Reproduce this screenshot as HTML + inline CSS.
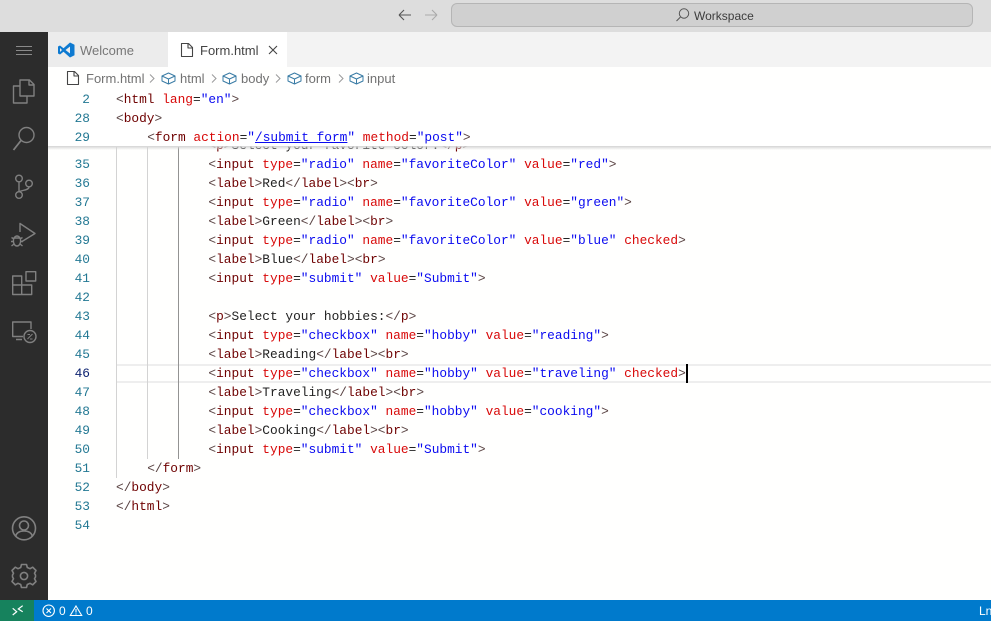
<!DOCTYPE html>
<html><head><meta charset="utf-8"><style>
html,body{margin:0;padding:0;background:#fff}
#r{position:relative;width:991px;height:621px;overflow:hidden;background:#fffffe;font-family:"Liberation Sans",sans-serif}
.b{position:absolute}
svg{position:absolute;left:0;top:0;overflow:visible}
.l,.n{position:absolute;font-family:"Liberation Mono",monospace;font-size:12.83px;line-height:19px;height:19px;white-space:pre;color:#222}
.n{left:60px;width:30px;text-align:right;color:#237893}
.l{left:116px}
i{font-style:normal}
.t{color:#6e0000}.a{color:#d80808}.s{color:#0a0af0}.d{color:#5a4444}
.g{position:absolute;width:1px;background:#d3d3d3}
.c{position:absolute;font-size:13px;color:#727272;line-height:18px;white-space:pre}
</style></head><body><div id="r">
<div class="b" style="left:0;top:0;width:991px;height:32px;background:#ddd"></div>
<div class="b" style="left:451px;top:3px;width:520px;height:22px;background:#d0d0d0;border:1px solid #b5b5b5;border-radius:6px"></div>
<div class="c" style="left:694px;top:7px;font-size:12px;color:#3c3c3c">Workspace</div>
<div class="b" style="left:48px;top:32px;width:943px;height:35px;background:#f3f3f3"></div>
<div class="b" style="left:48px;top:32px;width:120px;height:35px;background:#ececec"></div>
<div class="b" style="left:168px;top:32px;width:119px;height:35px;background:#fff"></div>
<div class="c" style="left:80px;top:42px;color:#777">Welcome</div>
<div class="c" style="left:200px;top:42px;color:#444">Form.html</div>
<div class="c" style="left:86px;top:70px">Form.html</div>
<div class="c" style="left:180px;top:70px">html</div>
<div class="c" style="left:241px;top:70px">body</div>
<div class="c" style="left:305px;top:70px">form</div>
<div class="c" style="left:367px;top:70px">input</div>
<div class="b" style="left:0;top:32px;width:48px;height:568px;background:#2c2c2c"></div>
<div class="b" style="left:0;top:600px;width:991px;height:21px;background:#007acc"></div>
<div class="b" style="left:0;top:600px;width:34px;height:21px;background:#16825d"></div>
<div class="c" style="left:59px;top:602px;font-size:12px;color:#fff">0</div>
<div class="c" style="left:86px;top:602px;font-size:12px;color:#fff">0</div>
<div class="c" style="left:979px;top:602px;font-size:12px;color:#fff">Ln</div>

<div class="b" style="left:117px;top:364px;width:874px;height:15px;border-top:2px solid #eee;border-bottom:2px solid #eee"></div>
<div class="g" style="left:116px;top:147px;height:331px"></div>
<div class="g" style="left:147px;top:147px;height:312px"></div>
<div class="g" style="left:178px;top:147px;height:312px;background:#939393"></div>

<div class="l" style="left:208.4px;top:136px"><i class="d">&lt;</i><i class="t">p</i><i class="d">&gt;</i>Select your favorite color:<i class="d">&lt;/</i><i class="t">p</i><i class="d">&gt;</i></div>
<div class="n" style="top:155px">35</div><div class="l" style="left:208.4px;top:155px"><i class="d">&lt;</i><i class="t">input</i> <i class="a">type</i>=<i class="s">"radio"</i> <i class="a">name</i>=<i class="s">"favoriteColor"</i> <i class="a">value</i>=<i class="s">"red"</i><i class="d">&gt;</i></div>
<div class="n" style="top:174px">36</div><div class="l" style="left:208.4px;top:174px"><i class="d">&lt;</i><i class="t">label</i><i class="d">&gt;</i>Red<i class="d">&lt;/</i><i class="t">label</i><i class="d">&gt;&lt;</i><i class="t">br</i><i class="d">&gt;</i></div>
<div class="n" style="top:193px">37</div><div class="l" style="left:208.4px;top:193px"><i class="d">&lt;</i><i class="t">input</i> <i class="a">type</i>=<i class="s">"radio"</i> <i class="a">name</i>=<i class="s">"favoriteColor"</i> <i class="a">value</i>=<i class="s">"green"</i><i class="d">&gt;</i></div>
<div class="n" style="top:212px">38</div><div class="l" style="left:208.4px;top:212px"><i class="d">&lt;</i><i class="t">label</i><i class="d">&gt;</i>Green<i class="d">&lt;/</i><i class="t">label</i><i class="d">&gt;&lt;</i><i class="t">br</i><i class="d">&gt;</i></div>
<div class="n" style="top:231px">39</div><div class="l" style="left:208.4px;top:231px"><i class="d">&lt;</i><i class="t">input</i> <i class="a">type</i>=<i class="s">"radio"</i> <i class="a">name</i>=<i class="s">"favoriteColor"</i> <i class="a">value</i>=<i class="s">"blue"</i> <i class="a">checked</i><i class="d">&gt;</i></div>
<div class="n" style="top:250px">40</div><div class="l" style="left:208.4px;top:250px"><i class="d">&lt;</i><i class="t">label</i><i class="d">&gt;</i>Blue<i class="d">&lt;/</i><i class="t">label</i><i class="d">&gt;&lt;</i><i class="t">br</i><i class="d">&gt;</i></div>
<div class="n" style="top:269px">41</div><div class="l" style="left:208.4px;top:269px"><i class="d">&lt;</i><i class="t">input</i> <i class="a">type</i>=<i class="s">"submit"</i> <i class="a">value</i>=<i class="s">"Submit"</i><i class="d">&gt;</i></div>
<div class="n" style="top:288px">42</div>
<div class="n" style="top:307px">43</div><div class="l" style="left:208.4px;top:307px"><i class="d">&lt;</i><i class="t">p</i><i class="d">&gt;</i>Select your hobbies:<i class="d">&lt;/</i><i class="t">p</i><i class="d">&gt;</i></div>
<div class="n" style="top:326px">44</div><div class="l" style="left:208.4px;top:326px"><i class="d">&lt;</i><i class="t">input</i> <i class="a">type</i>=<i class="s">"checkbox"</i> <i class="a">name</i>=<i class="s">"hobby"</i> <i class="a">value</i>=<i class="s">"reading"</i><i class="d">&gt;</i></div>
<div class="n" style="top:345px">45</div><div class="l" style="left:208.4px;top:345px"><i class="d">&lt;</i><i class="t">label</i><i class="d">&gt;</i>Reading<i class="d">&lt;/</i><i class="t">label</i><i class="d">&gt;&lt;</i><i class="t">br</i><i class="d">&gt;</i></div>
<div class="n" style="top:364px;color:#0b216f">46</div><div class="l" style="left:208.4px;top:364px"><i class="d">&lt;</i><i class="t">input</i> <i class="a">type</i>=<i class="s">"checkbox"</i> <i class="a">name</i>=<i class="s">"hobby"</i> <i class="a">value</i>=<i class="s">"traveling"</i> <i class="a">checked</i><i class="d">&gt;</i></div>
<div class="n" style="top:383px">47</div><div class="l" style="left:208.4px;top:383px"><i class="d">&lt;</i><i class="t">label</i><i class="d">&gt;</i>Traveling<i class="d">&lt;/</i><i class="t">label</i><i class="d">&gt;&lt;</i><i class="t">br</i><i class="d">&gt;</i></div>
<div class="n" style="top:402px">48</div><div class="l" style="left:208.4px;top:402px"><i class="d">&lt;</i><i class="t">input</i> <i class="a">type</i>=<i class="s">"checkbox"</i> <i class="a">name</i>=<i class="s">"hobby"</i> <i class="a">value</i>=<i class="s">"cooking"</i><i class="d">&gt;</i></div>
<div class="n" style="top:421px">49</div><div class="l" style="left:208.4px;top:421px"><i class="d">&lt;</i><i class="t">label</i><i class="d">&gt;</i>Cooking<i class="d">&lt;/</i><i class="t">label</i><i class="d">&gt;&lt;</i><i class="t">br</i><i class="d">&gt;</i></div>
<div class="n" style="top:440px">50</div><div class="l" style="left:208.4px;top:440px"><i class="d">&lt;</i><i class="t">input</i> <i class="a">type</i>=<i class="s">"submit"</i> <i class="a">value</i>=<i class="s">"Submit"</i><i class="d">&gt;</i></div>
<div class="n" style="top:459px">51</div><div class="l" style="left:147.2px;top:459px"><i class="d">&lt;/</i><i class="t">form</i><i class="d">&gt;</i></div>
<div class="n" style="top:478px">52</div><div class="l" style="top:478px"><i class="d">&lt;/</i><i class="t">body</i><i class="d">&gt;</i></div>
<div class="n" style="top:497px">53</div><div class="l" style="top:497px"><i class="d">&lt;/</i><i class="t">html</i><i class="d">&gt;</i></div>
<div class="n" style="top:516px">54</div>
<div class="b" style="left:686px;top:364px;width:2px;height:19px;background:#000"></div>

<div class="b" style="left:48px;top:90px;width:943px;height:56px;background:#fff"></div>
<div class="b" style="left:48px;top:146px;width:943px;height:4px;background:linear-gradient(#d4d4d4,rgba(220,220,220,0))"></div>
<div class="n" style="top:90px">2</div><div class="l" style="top:90px"><i class="d">&lt;</i><i class="t">html</i> <i class="a">lang</i>=<i class="s">"en"</i><i class="d">&gt;</i></div>
<div class="n" style="top:109px">28</div><div class="l" style="top:109px"><i class="d">&lt;</i><i class="t">body</i><i class="d">&gt;</i></div>
<div class="n" style="top:128px">29</div><div class="l" style="left:147.2px;top:128px"><i class="d">&lt;</i><i class="t">form</i> <i class="a">action</i>=<i class="s">"<u>/submit_form</u>"</i> <i class="a">method</i>=<i class="s">"post"</i><i class="d">&gt;</i></div>

<svg width="991" height="621" fill="none">
<g stroke="#555" stroke-width="1.1"><path d="M399 15H411M399 15l5-5M399 15l5 5"/></g>
<g stroke="#aaa" stroke-width="1.1"><path d="M425 15H437M437 15l-5-5M437 15l-5 5"/></g>
<g stroke="#555" stroke-width="1"><circle cx="684" cy="13.5" r="4.7"/><path d="M680.5 17L676.5 21"/></g>
<path d="M16 46.5H32M16 50.5H32M16 54.5H32" stroke="#8a8a8a" stroke-width="1"/>
<g stroke="#808080" stroke-width="1.4" stroke-linejoin="round">
<path d="M20 80H29.5L34 84.5V96H20ZM29 80V85H34"/>
<path d="M20 86H13.5V103H27V96"/>
<circle cx="26.5" cy="135" r="7.5"/><path d="M21 140.500L13.500 150" stroke-width="1.8"/>
<circle cx="19" cy="178.500" r="3.300"/><circle cx="29" cy="183.500" r="3.300"/><circle cx="19" cy="195" r="3.300"/>
<path d="M19 182V191.500M29 187C29 190 23 190 19.500 191.500"/>
<path d="M20 232V223.500L35 233.500L22 241.500"/>
<ellipse cx="17" cy="241" rx="3.600" ry="5"/><path d="M11.500 237.500L14 239M22.500 237.500L20 239M11 241.500H13.500M23 241.500H20.500M11.500 246L14 244M22.500 246L20 244M13.500 238H20.500"/>
<path d="M12.700 276H21.700V294.500H12.700ZM12.700 285H31.700V294.500H21.700M26 271.700H35.700V281H26Z"/>
<path d="M31 329V322H12.700V336.500H23M16 339.500H22"/><circle cx="30" cy="336.500" r="6"/><path d="M27.500 339L32.500 334M27.500 334.500h2.500M30 339h2.500" stroke-width="1"/>
<circle cx="24" cy="528.300" r="11.500" stroke-width="1.600"/><circle cx="24" cy="525.500" r="4.500" stroke-width="1.600"/><path d="M15.500 536.500C16.500 532.500 19.500 531 24 531S31.500 532.500 32.500 536.500" stroke-width="1.600"/>
<circle cx="24" cy="576" r="3.600" stroke-width="1.600"/><path stroke-width="1.600" d="M21.500 564.500H26.500L27.300 567.500L30 568.700L32.700 567.200L36 570.500L34.500 573.300L35.500 575V577L34.500 578.700L36 581.500L32.700 584.800L30 583.300L27.300 584.500L26.500 587.500H21.500L20.700 584.500L18 583.300L15.300 584.800L12 581.500L13.500 578.700L12.500 577V575L13.500 573.300L12 570.500L15.300 567.200L18 568.700L20.700 567.500Z"/>
</g>
<path d="M70 42.500L74.500 44.700V55.300L70 57.500L63.500 51.800L60 54.500L58 53.500V46.500L60 45.500L63.500 48.200ZM70 46.500L65.500 50L70 53.500ZM60 48V52L62 50Z" fill="#0e7ad1" fill-rule="evenodd"/>
<g stroke="#444" stroke-width="1.1" stroke-linejoin="round"><path d="M181.500 43.500H188.500L192.500 47.500V56.500H181.500ZM188 43.500V48H192.500"/><path d="M67.500 71.500H74.500L78.500 75.500V84.500H67.500ZM74 71.500V76H78.500"/><path d="M269 46L277 54M277 46L269 54"/></g>
<g stroke="#999" stroke-width="1"><path d="M150 74.500L154 78.500L150 82.500M212 74.500L216 78.500L212 82.500M276 74.500L280 78.500L276 82.500M339 74.500L343 78.500L339 82.500"/></g>
<defs><g id="q"><path d="M0 -2.500L6.500 -5.500L13 -2.500V2.500L6.500 5.500L0 2.500ZM0 -2.500L6.500 .5L13 -2.500M6.500 .5V5.500" stroke="#3a7ca5" stroke-width="1" stroke-linejoin="round"/></g></defs>
<use href="#q" x="162" y="78.500"/><use href="#q" x="223" y="78.500"/><use href="#q" x="288" y="78.500"/><use href="#q" x="350" y="78.500"/>
<g stroke="#fff" stroke-width="1.100"><circle cx="48.700" cy="610.700" r="5.700"/><path d="M46.500 608.500L51 613M51 608.500L46.500 613M76 606L81.700 615.500H70.300ZM76 609V612.500M76 613.500V614.500"/><path d="M12.700 608.300L16.700 611.700L12.700 615M22.700 605.700L18.300 609L22.700 611.700" stroke-width="1.200"/></g>
</svg>
</div></body></html>
